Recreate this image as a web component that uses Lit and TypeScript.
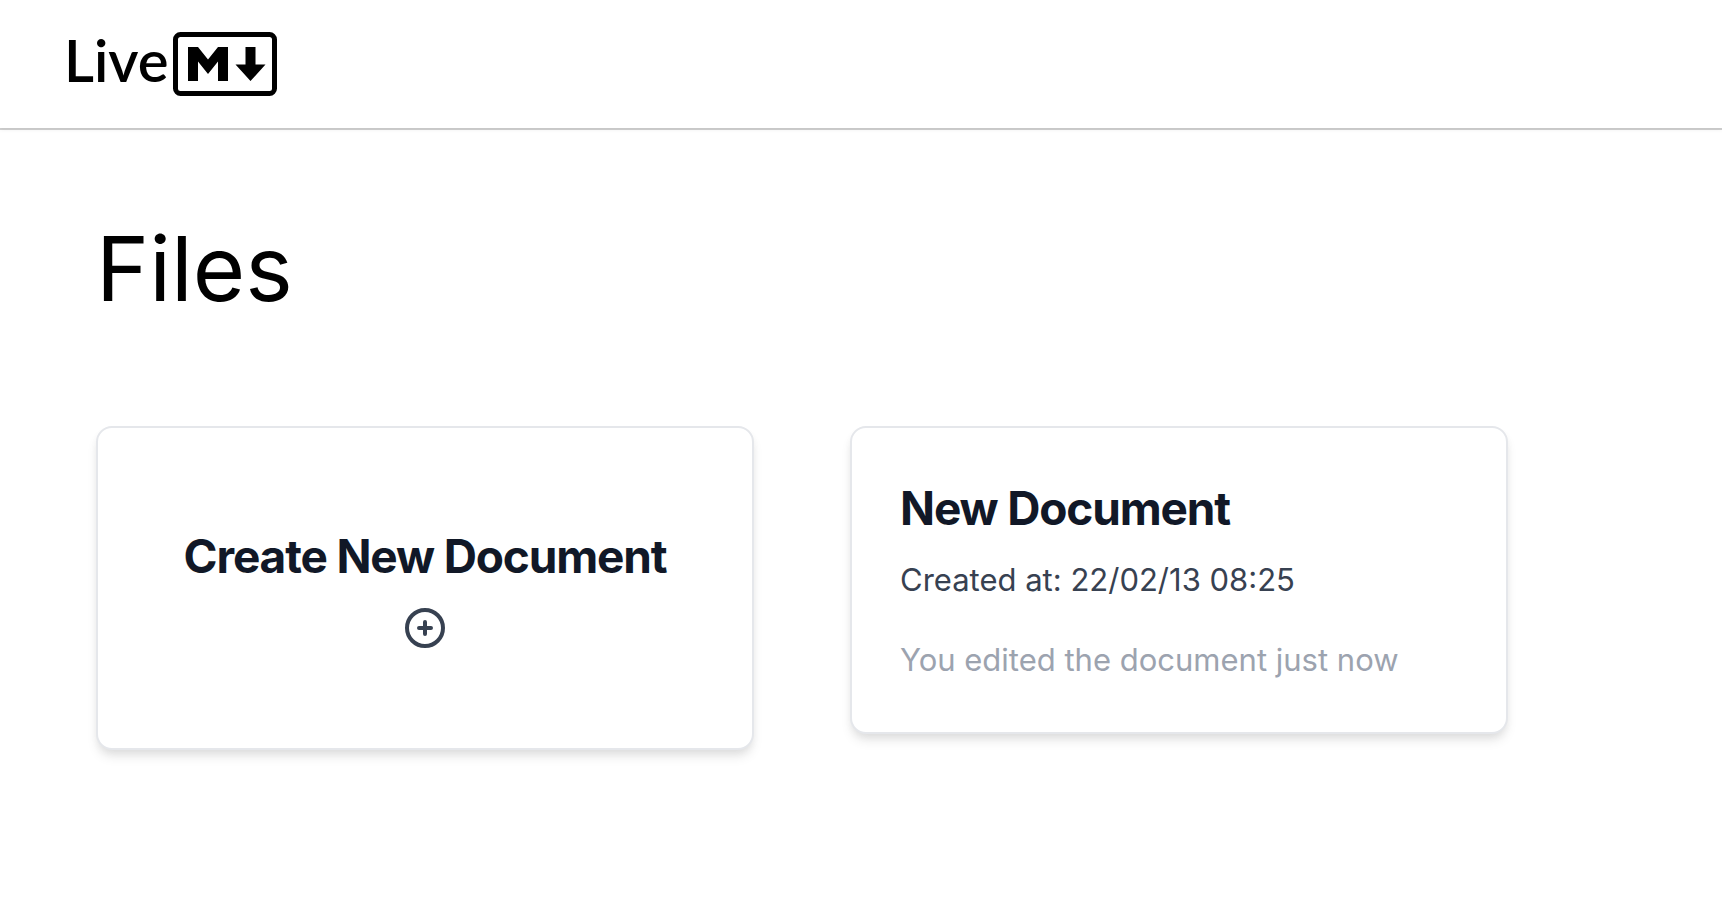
import { LitElement, html, css } from "lit";
import { customElement, property } from "lit/decorators.js";

interface DocumentFile {
  title: string;
  createdAt: string;
  edited: string;
}

@customElement("app-logo")
export class AppLogo extends LitElement {
  static styles = css`
    :host {
      display: block;
    }
    .logo {
      display: inline-flex;
      align-items: flex-start;
      gap: 4px;
      color: #000;
      text-decoration: none;
    }
    .word {
      font: 600 58px/56px Lato, "Open Sans", sans-serif;
    }
    .mark {
      display: block;
      width: 104px;
      height: 64px;
    }
  `;

  render() {
    return html`
      <a class="logo" href="#" aria-label="Live Markdown">
        <span class="word">Live</span>
        <svg class="mark" viewBox="0 0 208 128" aria-hidden="true">
          <rect x="5" y="5" width="198" height="118" rx="10" fill="none" stroke="#000" stroke-width="10" />
          <path d="M30 98V30h20l20 25 20-25h20v68H90V59L70 84 50 59v39zm125 0l-30-33h20V30h20v35h20z" />
        </svg>
      </a>
    `;
  }
}

@customElement("document-card")
export class DocumentCard extends LitElement {
  @property({ attribute: false }) file!: DocumentFile;

  static styles = css`
    :host {
      display: block;
    }
    .card {
      display: block;
      padding: 48px;
      border: 2px solid #e5e7eb;
      border-radius: 16px;
      background: #fff;
      box-shadow: 0 8px 12px -2px rgba(0, 0, 0, 0.1), 0 4px 8px -2px rgba(0, 0, 0, 0.06);
      color: inherit;
      text-decoration: none;
    }
    .title {
      margin: 0 0 16px;
      font-size: 46px;
      line-height: 64px;
      font-weight: 700;
      letter-spacing: -0.025em;
      color: #111827;
    }
    .text {
      margin: 0;
      font-size: 31px;
      line-height: 48px;
      color: #374151;
    }
    .edited {
      margin-top: 32px;
      color: #9ca3af;
    }
  `;

  render() {
    return html`
      <a class="card" href="#">
        <h2 class="title">${this.file.title}</h2>
        <p class="text">Created at: ${this.file.createdAt}</p>
        <p class="text edited">${this.file.edited}</p>
      </a>
    `;
  }
}

@customElement("create-card")
export class CreateCard extends LitElement {
  static styles = css`
    :host {
      display: block;
    }
    .card {
      display: flex;
      flex-direction: column;
      align-items: center;
      gap: 16px;
      width: 100%;
      box-sizing: border-box;
      padding: 96px 48px;
      border: 2px solid #e5e7eb;
      border-radius: 16px;
      background: #fff;
      box-shadow: 0 8px 12px -2px rgba(0, 0, 0, 0.1), 0 4px 8px -2px rgba(0, 0, 0, 0.06);
      font-family: inherit;
      cursor: pointer;
    }
    .title {
      font-size: 46px;
      line-height: 64px;
      font-weight: 700;
      letter-spacing: -0.025em;
      color: #111827;
    }
    .icon {
      display: block;
      width: 48px;
      height: 48px;
      color: #374151;
    }
  `;

  render() {
    return html`
      <button class="card" type="button">
        <span class="title">Create New Document</span>
        <svg class="icon" viewBox="0 0 24 24" fill="none" stroke="currentColor" stroke-width="2"
          stroke-linecap="round" stroke-linejoin="round" aria-hidden="true">
          <path d="M12 9v6m3-3H9m12 0a9 9 0 11-18 0 9 9 0 0118 0z" />
        </svg>
      </button>
    `;
  }
}

@customElement("app-root")
export class AppRoot extends LitElement {
  private files: DocumentFile[] = [
    {
      title: "New Document",
      createdAt: "22/02/13 08:25",
      edited: "You edited the document just now",
    },
  ];

  static styles = css`
    :host {
      display: block;
      min-height: 100vh;
      background: #fff;
      font-family: Inter, "Liberation Sans", sans-serif;
    }
    .header {
      padding: 32px 64px;
      box-shadow: 0 2px 0 rgba(0, 0, 0, 0.18), 0 2px 4px rgba(0, 0, 0, 0.06);
    }
    .main {
      padding: 96px;
    }
    .heading {
      margin: 0 0 112px;
      font-size: 90px;
      line-height: 90px;
      font-weight: 400;
      color: #000;
    }
    .grid {
      display: grid;
      grid-template-columns: repeat(2, minmax(0, 658px));
      align-items: start;
      gap: 96px;
    }
  `;

  render() {
    return html`
      <header class="header"><app-logo></app-logo></header>
      <main class="main">
        <h1 class="heading">Files</h1>
        <section class="grid">
          <create-card></create-card>
          ${this.files.map((file) => html`<document-card .file=${file}></document-card>`)}
        </section>
      </main>
    `;
  }
}
